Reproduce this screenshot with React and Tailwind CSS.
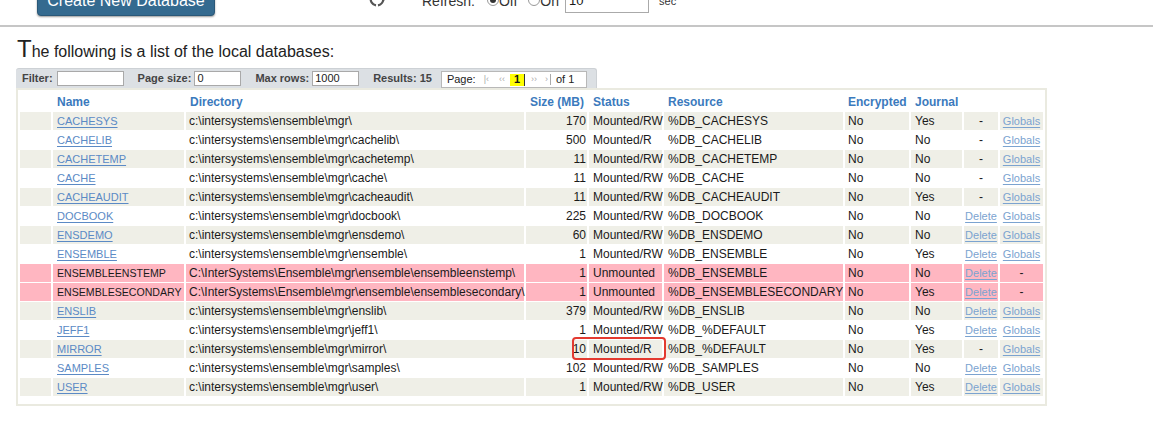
import React from 'react'

const dbs = [
  ['CACHESYS', 'c:\\intersystems\\ensemble\\mgr\\', '170', 'Mounted/RW', '%DB_CACHESYS', 'No', 'Yes', false, true],
  ['CACHELIB', 'c:\\intersystems\\ensemble\\mgr\\cachelib\\', '500', 'Mounted/R', '%DB_CACHELIB', 'No', 'No', false, true],
  ['CACHETEMP', 'c:\\intersystems\\ensemble\\mgr\\cachetemp\\', '11', 'Mounted/RW', '%DB_CACHETEMP', 'No', 'No', false, true],
  ['CACHE', 'c:\\intersystems\\ensemble\\mgr\\cache\\', '11', 'Mounted/RW', '%DB_CACHE', 'No', 'No', false, true],
  ['CACHEAUDIT', 'c:\\intersystems\\ensemble\\mgr\\cacheaudit\\', '11', 'Mounted/RW', '%DB_CACHEAUDIT', 'No', 'Yes', false, true],
  ['DOCBOOK', 'c:\\intersystems\\ensemble\\mgr\\docbook\\', '225', 'Mounted/RW', '%DB_DOCBOOK', 'No', 'No', true, true],
  ['ENSDEMO', 'c:\\intersystems\\ensemble\\mgr\\ensdemo\\', '60', 'Mounted/RW', '%DB_ENSDEMO', 'No', 'No', true, true],
  ['ENSEMBLE', 'c:\\intersystems\\ensemble\\mgr\\ensemble\\', '1', 'Mounted/RW', '%DB_ENSEMBLE', 'No', 'Yes', true, true],
  ['ENSEMBLEENSTEMP', 'C:\\InterSystems\\Ensemble\\mgr\\ensemble\\ensembleenstemp\\', '1', 'Unmounted', '%DB_ENSEMBLE', 'No', 'No', true, false],
  ['ENSEMBLESECONDARY', 'C:\\InterSystems\\Ensemble\\mgr\\ensemble\\ensemblesecondary\\', '1', 'Unmounted', '%DB_ENSEMBLESECONDARY', 'No', 'Yes', true, false],
  ['ENSLIB', 'c:\\intersystems\\ensemble\\mgr\\enslib\\', '379', 'Mounted/RW', '%DB_ENSLIB', 'No', 'No', true, true],
  ['JEFF1', 'c:\\intersystems\\ensemble\\mgr\\jeff1\\', '1', 'Mounted/RW', '%DB_%DEFAULT', 'No', 'Yes', true, true],
  ['MIRROR', 'c:\\intersystems\\ensemble\\mgr\\mirror\\', '10', 'Mounted/R', '%DB_%DEFAULT', 'No', 'Yes', false, true],
  ['SAMPLES', 'c:\\intersystems\\ensemble\\mgr\\samples\\', '102', 'Mounted/RW', '%DB_SAMPLES', 'No', 'No', true, true],
  ['USER', 'c:\\intersystems\\ensemble\\mgr\\user\\', '1', 'Mounted/RW', '%DB_USER', 'No', 'Yes', true, true],
]

function RefreshIcon() {
  return (
    <svg width="20" height="20" viewBox="0 0 20 20" fill="none" stroke="#555" strokeWidth="2.2">
      <path d="M4 8 A6.5 6.5 0 0 0 9 16.4" />
      <path d="M16 12 A6.5 6.5 0 0 0 11 3.6" />
      <path d="M11 16.4 A6.5 6.5 0 0 0 16.3 10" />
    </svg>
  )
}

function Radio({ checked }) {
  return (
    <span className="w-[12px] h-[12px] rounded-full border border-[#999] bg-white flex items-center justify-center">
      {checked && <span className="w-[6px] h-[6px] rounded-full bg-[#333]" />}
    </span>
  )
}

export default function App() {
  return (
    <div className="relative w-[1153px] h-[421px] overflow-hidden bg-white font-['Liberation_Sans',Arial,sans-serif] text-[#1a1a1a]">
      {/* top bar, mostly scrolled off */}
      <div className="h-[25px] overflow-hidden">
        <div className="-mt-[19px] h-[40px] flex items-center">
          <div className="ml-[37px] w-[178px] h-[30px] rounded-[4px] bg-[#346a8f] border border-[#2a5878] shadow-[0_1px_2px_rgba(0,0,0,0.4)] text-white text-[16px] flex items-center justify-center">
            Create New Database
          </div>
          <div className="ml-[152px] mt-[-4px]">
            <RefreshIcon />
          </div>
          <span className="ml-[35px] text-[14px] text-[#333]">Refresh:</span>
          <span className="ml-[12px] mt-[-2px]"><Radio checked /></span>
          <span className="text-[14px] text-[#333]">Off</span>
          <span className="ml-[11px] mt-[-2px]"><Radio /></span>
          <span className="text-[14px] text-[#333]">On</span>
          <div className="ml-[6px] w-[84px] h-[24px] border border-[#aaa] bg-white text-[13px] pl-[3px] flex items-center">10</div>
          <span className="ml-[10px] text-[11px] text-[#333]">sec</span>
        </div>
      </div>
      <div className="h-[2px] bg-[#c6c6c6]" />

      <div className="pl-[17px] pt-[10px] leading-none text-[#222]">
        <span className="text-[24px]">T</span>
        <span className="text-[16px]">he following is a list of the local databases:</span>
      </div>

      {/* filter toolbar */}
      <div className="ml-[16px] mt-[7px] w-[581px] h-[20px] bg-[#dce0e4] rounded-t-[3px] border-t border-r border-[#cdd1d5] flex items-center text-[11px] font-bold text-[#444] pl-[6px]">
        <span>Filter:</span>
        <div className="ml-[4px] w-[67px] h-[15px] bg-white border border-[#a9a9a9]" />
        <span className="ml-[14px]">Page size:</span>
        <div className="ml-[3px] w-[47px] h-[15px] bg-white border border-[#a9a9a9] font-normal text-[#222] pl-[2px] leading-[13px]">0</div>
        <span className="ml-[14px]">Max rows:</span>
        <div className="ml-[3px] w-[47px] h-[15px] bg-white border border-[#a9a9a9] font-normal text-[#222] pl-[2px] leading-[13px]">1000</div>
        <span className="ml-[14px]">Results: 15</span>
        <div className="ml-[9px] mt-[2px] w-[146px] h-[17px] bg-white border border-[#b8b8b8] flex items-center font-normal text-[#222] pl-[5px]">
          <span>Page:</span>
          <span className="ml-[8px] text-[9px] text-[#aaa]">|‹</span>
          <span className="ml-[10px] text-[9px] text-[#aaa]">‹‹</span>
          <span className="ml-[5px] w-[15px] h-[12px] bg-[#ffff00] border-r border-[#333] font-bold text-[#111] flex items-center justify-center">1</span>
          <span className="ml-[6px] text-[9px] text-[#aaa]">››</span>
          <span className="ml-[8px] text-[9px] text-[#aaa]">›</span>
          <span className="ml-[2px] w-px h-[11px] bg-[#aaa]" />
          <span className="ml-[5px]">of 1</span>
        </div>
      </div>

      {/* databases table */}
      <div className="ml-[16px] w-[1031px] border-2 border-[#eaeae0] bg-white pb-[7px]">
        <table className="table-fixed w-[1027px] border-separate border-spacing-x-[2px] border-spacing-y-[1px] text-[12px]">
          <colgroup>
            <col className="w-[31px]" />
            <col className="w-[131px]" />
            <col className="w-[338px]" />
            <col className="w-[61px]" />
            <col className="w-[73px]" />
            <col className="w-[179px]" />
            <col className="w-[64px]" />
            <col className="w-[51px]" />
            <col className="w-[34px]" />
            <col className="w-[43px]" />
          </colgroup>
          <thead>
            <tr className="h-[20px] text-left font-bold text-[#3b7abd] align-bottom leading-[17px]">
              <th />
              <th className="pl-[4px] font-bold">Name</th>
              <th className="pl-[4px] font-bold">Directory</th>
              <th className="pl-[4px] font-bold whitespace-nowrap">Size (MB)</th>
              <th className="pl-[4px] font-bold">Status</th>
              <th className="pl-[4px] font-bold">Resource</th>
              <th className="pl-[3px] font-bold">Encrypted</th>
              <th className="pl-[4px] font-bold">Journal</th>
              <th />
              <th />
            </tr>
          </thead>
          <tbody>
            {dbs.map((d, i) => {
              const [name, dir, size, status, res, enc, jrn, canDelete, mounted] = d
              const bg = !mounted ? 'bg-[#ffb6c1]' : i % 2 === 0 ? 'bg-[#efefe7]' : 'bg-white'
              return (
                <tr key={name} className="h-[18px] leading-[18px]">
                  <td className={bg} />
                  <td className={`${bg} pl-[4px] text-[11px] whitespace-nowrap`}>
                    {mounted ? (
                      <span className="text-[#5b8ac5] underline underline-offset-[2px]">{name}</span>
                    ) : (
                      <span className="text-[10.6px]">{name}</span>
                    )}
                  </td>
                  <td className={`${bg} pl-[3px] whitespace-nowrap`}>{dir}</td>
                  <td className={`${bg} pr-[1px] text-right`}>{size}</td>
                  <td className={`${bg} pl-[4px] whitespace-nowrap`}>{status}</td>
                  <td className={`${bg} pl-[4px] whitespace-nowrap`}>{res}</td>
                  <td className={`${bg} pl-[3px]`}>{enc}</td>
                  <td className={`${bg} pl-[4px]`}>{jrn}</td>
                  <td className={`${bg} text-center text-[11px]`}>
                    {canDelete ? <span className="text-[#7ba3d0] underline underline-offset-[2px]">Delete</span> : <span className="text-[12px]">-</span>}
                  </td>
                  <td className={`${bg} text-center text-[11px]`}>
                    {mounted ? <span className="text-[#7ba3d0] underline underline-offset-[2px]">Globals</span> : <span className="text-[12px]">-</span>}
                  </td>
                </tr>
              )
            })}
          </tbody>
        </table>
      </div>

      {/* annotation around MIRROR status */}
      <div className="absolute left-[572px] top-[337px] w-[94px] h-[23px] border-2 border-[#e33a30] rounded-[4px]" />
    </div>
  )
}
